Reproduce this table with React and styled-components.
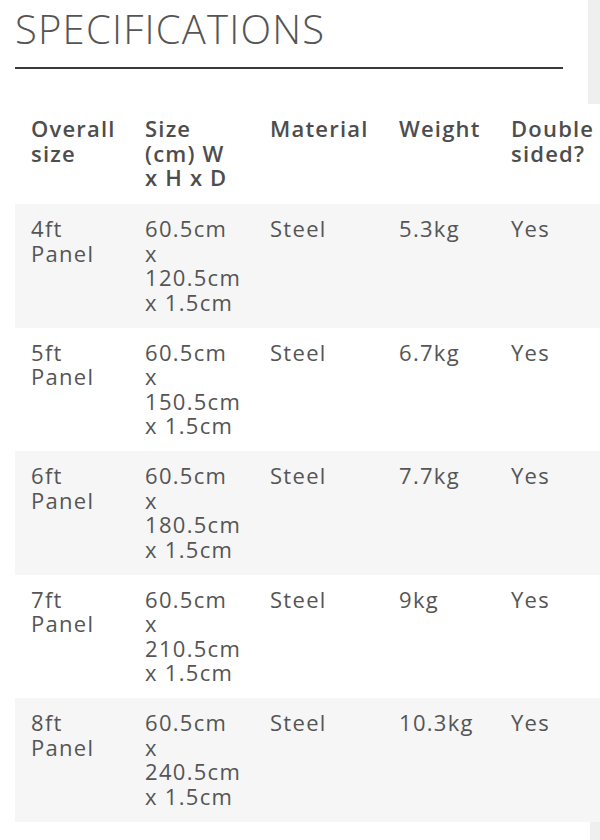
import React from "react";
import styled, { createGlobalStyle } from "styled-components";

const GlobalStyle = createGlobalStyle`
  html, body {
    margin: 0;
    padding: 0;
    background: #ffffff;
  }
  body {
    font-family: "Open Sans", "Liberation Sans", sans-serif;
    color: #555555;
  }
`;

const Page = styled.div`
  width: 600px;
  height: 840px;
  overflow: hidden;
  display: flex;
  flex-direction: column;
  background: #ffffff;
`;

const TopBand = styled.div`
  display: flex;
  height: 104px;
  flex-shrink: 0;
`;

const HeaderBlock = styled.div`
  flex: 1;
  padding: 5px 25px 0 15px;
`;

const SideStrip = styled.div`
  width: ${(p) => p.$w || 12}px;
  background: #efefef;
  flex-shrink: 0;
`;

const Heading = styled.h2`
  margin: 0;
  font-size: 40px;
  line-height: 48px;
  font-weight: 350;
  letter-spacing: 1.2px;
  color: #555555;
`;

const Rule = styled.div`
  height: 2px;
  background: #3a3a3a;
  margin-top: 14px;
`;

const TableWrap = styled.div`
  margin-left: 15px;
  overflow: hidden;
  flex-shrink: 0;
`;

const Table = styled.table`
  width: 620px;
  table-layout: fixed;
  border-collapse: collapse;
  border-spacing: 0;
`;

const Row = styled.tr`
  background: ${(p) => (p.$striped ? "#f6f6f6" : "#ffffff")};
`;

const HeadCell = styled.th`
  text-align: left;
  vertical-align: top;
  padding: 12px 16px 14.5px 16px;
  font-size: 22px;
  line-height: 24.5px;
  font-weight: 600;
  letter-spacing: 1.2px;
  color: #4d4d4d;
  white-space: nowrap;
`;

const Cell = styled.td`
  vertical-align: top;
  padding: 12px 16px 13.5px 16px;
  font-size: 22px;
  line-height: 24.5px;
  font-weight: 400;
  letter-spacing: 1.3px;
  color: #555555;
  white-space: nowrap;
`;

const BottomBand = styled.div`
  flex: 1;
  display: flex;
  justify-content: flex-end;
`;

const Lines = ({ lines }) =>
  lines.map((l, i) => (
    <React.Fragment key={i}>
      {i > 0 && <br />}
      {l}
    </React.Fragment>
  ));

const headers = [
  ["Overall", "size"],
  ["Size", "(cm) W", "x H x D"],
  ["Material"],
  ["Weight"],
  ["Double", "sided?"],
];

const rows = [
  { size: "4ft", h: "120.5cm", weight: "5.3kg" },
  { size: "5ft", h: "150.5cm", weight: "6.7kg" },
  { size: "6ft", h: "180.5cm", weight: "7.7kg" },
  { size: "7ft", h: "210.5cm", weight: "9kg" },
  { size: "8ft", h: "240.5cm", weight: "10.3kg" },
];

const widths = [114, 125, 129, 112, 140];

export default function App() {
  return (
    <>
      <GlobalStyle />
      <Page>
        <TopBand>
          <HeaderBlock>
            <Heading>SPECIFICATIONS</Heading>
            <Rule />
          </HeaderBlock>
          <SideStrip $w={12} />
        </TopBand>
        <TableWrap>
          <Table>
            <colgroup>
              {widths.map((w, i) => (
                <col key={i} style={{ width: w }} />
              ))}
            </colgroup>
            <thead>
              <Row>
                {headers.map((h, i) => (
                  <HeadCell key={i}>
                    <Lines lines={h} />
                  </HeadCell>
                ))}
              </Row>
            </thead>
            <tbody>
              {rows.map((r, i) => (
                <Row key={r.size} $striped={i % 2 === 0}>
                  <Cell>
                    <Lines lines={[r.size, "Panel"]} />
                  </Cell>
                  <Cell>
                    <Lines lines={["60.5cm", "x", r.h, "x 1.5cm"]} />
                  </Cell>
                  <Cell>Steel</Cell>
                  <Cell>{r.weight}</Cell>
                  <Cell>Yes</Cell>
                </Row>
              ))}
            </tbody>
          </Table>
        </TableWrap>
        <BottomBand>
          <SideStrip $w={10} />
        </BottomBand>
      </Page>
    </>
  );
}
